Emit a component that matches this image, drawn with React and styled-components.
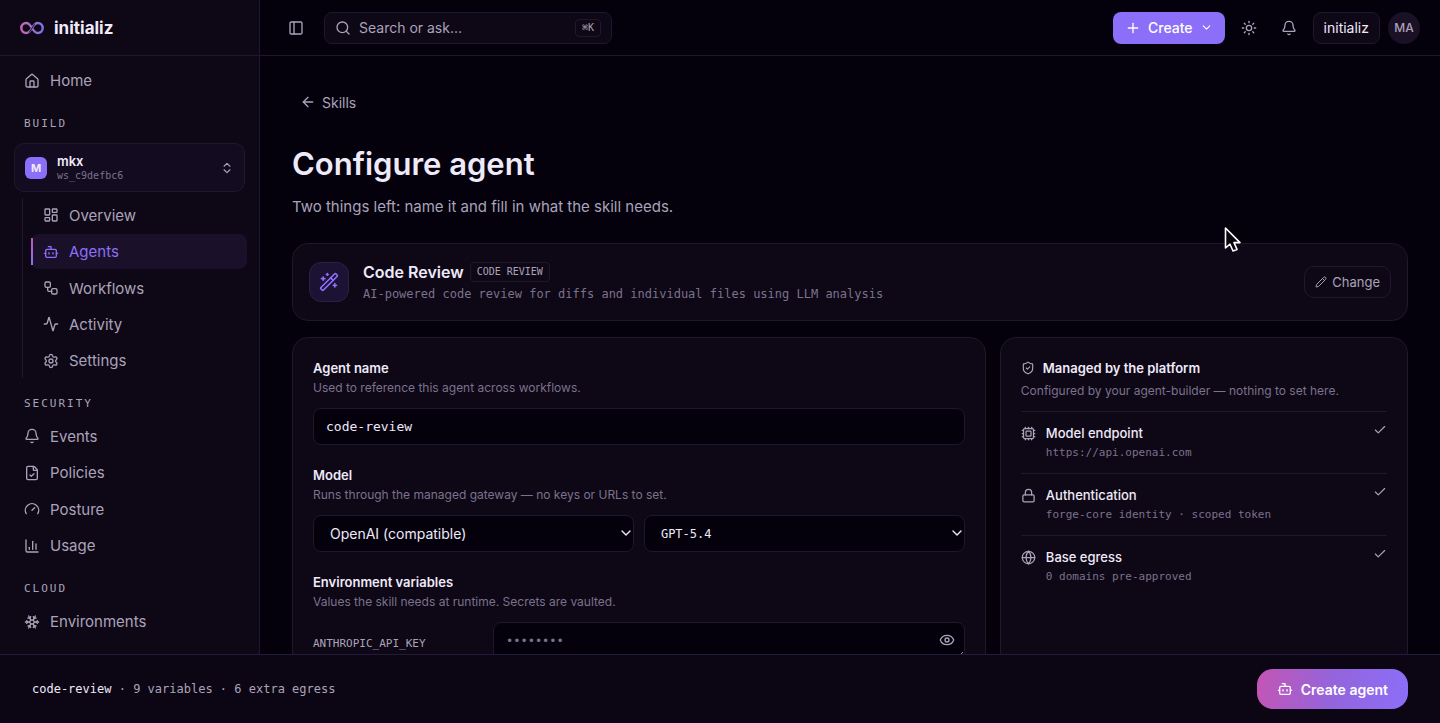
import React from 'react';
import styled, { createGlobalStyle, css } from 'styled-components';
import {
  Activity,
  ArrowLeft,
  Bell,
  Bot,
  ChartColumn,
  Check,
  ChevronDown,
  ChevronsUpDown,
  Cpu,
  Eye,
  FileCheck,
  Gauge,
  Globe,
  House,
  LayoutDashboard,
  Lock,
  PanelLeft,
  Pencil,
  Plus,
  Search,
  Settings,
  ShieldCheck,
  Snowflake,
  Sun,
  WandSparkles,
  Workflow,
} from 'lucide-react';

const sans = "Inter, 'Liberation Sans', sans-serif";
const mono = "'DejaVu Sans Mono', 'Liberation Mono', monospace";

const color = {
  page: '#04010d',
  surface: '#0e0716',
  active: '#1a1029',
  line: '#1f172c',
  text: '#efeaf9',
  soft: '#aaa3b9',
  muted: '#7b728c',
  accent: '#8b6ff8',
  pink: '#c455b4',
};

const GlobalStyle = createGlobalStyle`
  * {
    box-sizing: border-box;
  }
  body {
    margin: 0;
    background: ${color.page};
    color: ${color.text};
    font-family: ${sans};
    font-size: 14px;
    -webkit-font-smoothing: antialiased;
  }
  button, input, select, textarea {
    font-family: inherit;
    color: inherit;
    outline: none;
  }
  button {
    cursor: pointer;
  }
  a {
    color: inherit;
    text-decoration: none;
  }
  h1, h2, p {
    margin: 0;
  }
`;

const Shell = styled.div`
  display: flex;
  flex-direction: column;
  height: 100vh;
`;

const Body = styled.div`
  display: flex;
  flex: 1;
  min-height: 0;
`;

const Sidebar = styled.aside`
  width: 260px;
  flex-shrink: 0;
  overflow: hidden;
  background: ${color.surface};
  border-right: 1px solid ${color.line};
`;

const Brand = styled.a`
  display: flex;
  align-items: center;
  gap: 10px;
  height: 56px;
  padding: 0 20px;
  border-bottom: 1px solid ${color.line};
  font-size: 17px;
  font-weight: 700;
`;

const Nav = styled.nav`
  padding: 7px 12px;
`;

const NavGroup = styled.div`
  display: flex;
  flex-direction: column;
  gap: 2px;
  height: ${props => props.$height}px;
`;

const Tree = styled(NavGroup)`
  margin: 6px 0 0 10px;
  padding-left: 8px;
  border-left: 1px solid ${color.line};
`;

const NavLink = styled.a`
  position: relative;
  display: flex;
  flex: 1;
  align-items: center;
  gap: 10px;
  padding: 0 12px;
  border-radius: 8px;
  color: ${color.soft};
  font-size: 15px;

  ${props => props.$active && css`
    background: ${color.active};
    color: ${color.accent};

    &::before {
      content: '';
      position: absolute;
      left: 0;
      top: 4px;
      bottom: 4px;
      width: 2px;
      background: linear-gradient(${color.pink}, ${color.accent});
    }
  `}
`;

const NavHeading = styled.div`
  padding: 18px 12px 7px;
  color: ${color.soft};
  font-family: ${mono};
  font-size: 11px;
  line-height: 16px;
  letter-spacing: 2px;
`;

const Workspace = styled.button`
  display: flex;
  align-items: center;
  gap: 10px;
  width: calc(100% - 4px);
  height: 49px;
  margin: 4px 2px 0;
  padding: 0 10px;
  border: 1px solid ${color.line};
  border-radius: 10px;
  background: #130b1f;
  text-align: left;
`;

const WorkspaceBadge = styled.span`
  width: 22px;
  border-radius: 6px;
  background: ${color.accent};
  font-size: 11px;
  font-weight: 700;
  line-height: 22px;
  text-align: center;
`;

const WorkspaceText = styled.span`
  display: flex;
  flex: 1;
  flex-direction: column;
  font-size: 13px;
  font-weight: 600;
  line-height: 16px;
`;

const WorkspaceId = styled.span`
  color: ${color.muted};
  font-family: ${mono};
  font-size: 10px;
  font-weight: 400;
  line-height: 14px;
`;

const Content = styled.div`
  display: flex;
  flex: 1;
  flex-direction: column;
  min-width: 0;
`;

const Topbar = styled.header`
  display: flex;
  flex-shrink: 0;
  align-items: center;
  gap: 8px;
  height: 56px;
  padding: 0 20px;
  border-bottom: 1px solid ${color.line};
`;

const IconButton = styled.button`
  display: flex;
  align-items: center;
  justify-content: center;
  width: 32px;
  height: 32px;
  padding: 0;
  border: 0;
  background: none;
  color: ${color.soft};
`;

const SearchBox = styled.label`
  display: flex;
  align-items: center;
  gap: 8px;
  width: 288px;
  height: 32px;
  margin: 0 auto 0 4px;
  padding: 0 10px;
  border: 1px solid ${color.line};
  border-radius: 8px;
  background: ${color.surface};
  color: ${color.soft};
`;

const SearchInput = styled.input`
  flex: 1;
  min-width: 0;
  padding: 0;
  border: 0;
  background: none;
  font-size: 14px;

  &::placeholder {
    color: ${color.soft};
  }
`;

const Kbd = styled.kbd`
  padding: 0 6px;
  border: 1px solid ${color.line};
  border-radius: 4px;
  font-family: ${mono};
  font-size: 10px;
  line-height: 16px;
`;

const CreateButton = styled.button`
  display: flex;
  align-items: center;
  gap: 7px;
  height: 32px;
  padding: 0 12px;
  border: 0;
  border-radius: 8px;
  background: ${color.accent};
  color: #fff;
  font-size: 14px;
  font-weight: 500;
`;

const OrgButton = styled.button`
  height: 32px;
  padding: 0 10px;
  border: 1px solid ${color.line};
  border-radius: 8px;
  background: ${color.surface};
  font-size: 14px;
`;

const Avatar = styled.button`
  width: 32px;
  height: 32px;
  padding: 0;
  border: 0;
  border-radius: 50%;
  background: #1a1126;
  color: ${color.soft};
  font-size: 12px;
  font-weight: 500;
`;

const Main = styled.main`
  flex: 1;
  min-height: 0;
  overflow: hidden;
  padding: 30px 32px 0;
`;

const BackLink = styled.a`
  display: flex;
  align-items: center;
  gap: 6px;
  width: fit-content;
  height: 32px;
  padding: 0 8px;
  color: ${color.soft};
  font-size: 14px;
`;

const Title = styled.h1`
  margin-top: 26px;
  font-size: 31px;
  font-weight: 600;
  line-height: 40px;
`;

const Subtitle = styled.p`
  margin: 11px 0 24px;
  color: ${color.soft};
  font-size: 15px;
  line-height: 24px;
`;

const Card = styled.section`
  border: 1px solid ${color.line};
  border-radius: 16px;
  background: ${color.surface};
`;

const Skill = styled(Card)`
  display: flex;
  align-items: center;
  gap: 14px;
  height: 78px;
  padding: 0 16px;
`;

const SkillIcon = styled.div`
  display: flex;
  align-items: center;
  justify-content: center;
  width: 40px;
  height: 40px;
  border: 1px solid #2b2141;
  border-radius: 12px;
  background: #1c1233;
  color: ${color.accent};
`;

const SkillBody = styled.div`
  flex: 1;
`;

const SkillHead = styled.div`
  display: flex;
  align-items: center;
  gap: 6px;
`;

const SkillName = styled.h2`
  font-size: 16px;
  font-weight: 600;
  line-height: 24px;
`;

const Tag = styled.span`
  padding: 0 6px;
  border: 1px solid ${color.line};
  border-radius: 4px;
  color: ${color.soft};
  font-family: ${mono};
  font-size: 10px;
  line-height: 18px;
`;

const SkillText = styled.p`
  color: ${color.muted};
  font-family: ${mono};
  font-size: 12px;
  line-height: 20px;
`;

const ChangeButton = styled.button`
  display: flex;
  align-items: center;
  gap: 5px;
  height: 32px;
  padding: 0 10px;
  border: 1px solid ${color.line};
  border-radius: 10px;
  background: none;
  color: ${color.soft};
  font-size: 13px;
`;

const Panels = styled.div`
  display: grid;
  grid-template-columns: 1.7fr 1fr;
  gap: 14px;
  height: 440px;
  margin-top: 16px;
`;

const Panel = styled(Card)`
  padding: 20px;
`;

const Field = styled.div`
  margin-bottom: 20px;
`;

const FieldLabel = styled.label`
  display: block;
  font-size: 13px;
  font-weight: 600;
  line-height: 20px;
`;

const Help = styled.p`
  margin-bottom: 10px;
  color: ${color.muted};
  font-size: 12px;
  line-height: 20px;
`;

const control = css`
  width: 100%;
  border: 1px solid ${color.line};
  border-radius: 8px;
  background: ${color.page};
`;

const TextInput = styled.input`
  ${control}
  display: block;
  height: 37px;
  padding: 0 12px;
  font-family: ${mono};
  font-size: 13px;
`;

const SelectRow = styled.div`
  display: grid;
  grid-template-columns: 1fr 1fr;
  gap: 10px;
`;

const SelectBox = styled.div`
  position: relative;

  svg {
    position: absolute;
    top: 10px;
    right: 0;
    pointer-events: none;
  }
`;

const Select = styled.select`
  ${control}
  display: block;
  height: 37px;
  padding: 0 16px;
  appearance: none;
  font-family: ${props => (props.$mono ? mono : sans)};
  font-size: ${props => (props.$mono ? 12 : 14)}px;
`;

const EnvRow = styled.div`
  display: grid;
  grid-template-columns: 170px 1fr;
  align-items: center;
  gap: 10px;
`;

const EnvName = styled.label`
  color: ${color.soft};
  font-family: ${mono};
  font-size: 11px;
`;

const EnvValue = styled.div`
  position: relative;
  height: 43px;
`;

const SecretInput = styled.textarea`
  ${control}
  display: block;
  height: 38px;
  min-height: 38px;
  padding: 8px 36px 8px 12px;
  font-family: ${mono};
  font-size: 12px;
  line-height: 20px;
  resize: vertical;

  &::placeholder {
    color: ${color.muted};
  }
`;

const RevealButton = styled(IconButton)`
  position: absolute;
  top: 2px;
  right: 2px;
`;

const PanelTitle = styled.h2`
  display: flex;
  align-items: center;
  gap: 8px;
  font-size: 13px;
  font-weight: 600;
  line-height: 20px;

  svg {
    color: ${color.soft};
  }
`;

const PanelText = styled.p`
  padding: 2px 0 9px;
  color: ${color.muted};
  font-size: 12px;
  line-height: 22px;
`;

const Managed = styled.div`
  display: flex;
  gap: 10px;
  padding: 11px 0;
  border-top: 1px solid ${color.line};
  color: ${color.soft};
`;

const ManagedIcon = styled.span`
  display: flex;
  align-items: center;
  height: 20px;
`;

const ManagedText = styled.div`
  flex: 1;
  color: ${color.text};
  font-size: 13px;
  font-weight: 500;
  line-height: 20px;
`;

const ManagedValue = styled.div`
  color: ${color.muted};
  font-family: ${mono};
  font-size: 11px;
  font-weight: 400;
  line-height: 19px;
`;

const Footer = styled.footer`
  display: flex;
  flex-shrink: 0;
  align-items: center;
  justify-content: space-between;
  padding: 14px 32px;
  border-top: 1px solid #251a3a;
  background: #0c0614;
`;

const Summary = styled.p`
  color: ${color.soft};
  font-family: ${mono};
  font-size: 12px;

  strong {
    color: ${color.text};
    font-weight: 500;
  }
`;

const SubmitButton = styled.button`
  display: flex;
  align-items: center;
  gap: 8px;
  height: 40px;
  padding: 0 20px;
  border: 0;
  border-radius: 16px;
  background: linear-gradient(100deg, ${color.pink}, #9464dc 50%, ${color.accent});
  color: #fff;
  font-size: 14px;
  font-weight: 600;
`;

const Pointer = styled.svg`
  position: fixed;
  left: 1223px;
  top: 225px;
  pointer-events: none;
`;

function Logo() {
  return (
    <svg width="24" height="14" viewBox="0 0 24 14" fill="none">
      <defs>
        <linearGradient id="brand" x1="0" y1="0" x2="24" y2="0" gradientUnits="userSpaceOnUse">
          <stop offset="0" stopColor="#cf63b0" />
          <stop offset="0.5" stopColor="#9a72c8" />
          <stop offset="1" stopColor="#7f70f0" />
        </linearGradient>
      </defs>
      <path
        d="M12 7C10.200 4 8.600 2 6.300 2a5 5 0 0 0 0 10c2.300 0 3.900-2 5.700-5s3.400-5 5.700-5a5 5 0 0 1 0 10c-2.300 0-3.900-2-5.700-5z"
        stroke="url(#brand)"
        strokeWidth="2.400"
      />
      <path d="M9.200 11.400l5.400-8.200" stroke={color.surface} strokeWidth="0.900" />
    </svg>
  );
}

const buildLinks = [
  { label: 'Overview', icon: LayoutDashboard },
  { label: 'Agents', icon: Bot, active: true },
  { label: 'Workflows', icon: Workflow },
  { label: 'Activity', icon: Activity },
  { label: 'Settings', icon: Settings },
];

const securityLinks = [
  { label: 'Events', icon: Bell },
  { label: 'Policies', icon: FileCheck },
  { label: 'Posture', icon: Gauge },
  { label: 'Usage', icon: ChartColumn },
];

const managed = [
  { label: 'Model endpoint', value: 'https://api.openai.com', icon: Cpu },
  { label: 'Authentication', value: 'forge-core identity · scoped token', icon: Lock },
  { label: 'Base egress', value: '0 domains pre-approved', icon: Globe },
];

function renderLink({ label, icon: Icon, active }) {
  return (
    <NavLink key={label} href="#" $active={active}>
      <Icon size={16} />
      {label}
    </NavLink>
  );
}

export default function App() {
  return (
    <Shell>
      <GlobalStyle />
      <Body>
        <Sidebar>
          <Brand href="#">
            <Logo />
            initializ
          </Brand>
          <Nav>
            <NavGroup $height={35}>
              {renderLink({ label: 'Home', icon: House })}
            </NavGroup>
            <NavHeading>BUILD</NavHeading>
            <Workspace>
              <WorkspaceBadge>M</WorkspaceBadge>
              <WorkspaceText>
                mkx
                <WorkspaceId>ws_c9defbc6</WorkspaceId>
              </WorkspaceText>
              <ChevronsUpDown size={14} color={color.soft} />
            </Workspace>
            <Tree $height={180}>{buildLinks.map(renderLink)}</Tree>
            <NavHeading>SECURITY</NavHeading>
            <NavGroup $height={144}>{securityLinks.map(renderLink)}</NavGroup>
            <NavHeading>CLOUD</NavHeading>
            <NavGroup $height={35}>
              {renderLink({ label: 'Environments', icon: Snowflake })}
            </NavGroup>
          </Nav>
        </Sidebar>

        <Content>
          <Topbar>
            <IconButton aria-label="Toggle sidebar"><PanelLeft size={16} /></IconButton>
            <SearchBox>
              <Search size={16} />
              <SearchInput type="text" placeholder="Search or ask..." />
              <Kbd>⌘K</Kbd>
            </SearchBox>
            <CreateButton>
              <Plus size={16} />
              Create
              <ChevronDown size={13} />
            </CreateButton>
            <IconButton aria-label="Theme"><Sun size={16} /></IconButton>
            <IconButton aria-label="Notifications"><Bell size={16} /></IconButton>
            <OrgButton>initializ</OrgButton>
            <Avatar>MA</Avatar>
          </Topbar>

          <Main>
            <BackLink href="#">
              <ArrowLeft size={16} />
              Skills
            </BackLink>
            <Title>Configure agent</Title>
            <Subtitle>Two things left: name it and fill in what the skill needs.</Subtitle>

            <Skill>
              <SkillIcon><WandSparkles size={20} /></SkillIcon>
              <SkillBody>
                <SkillHead>
                  <SkillName>Code Review</SkillName>
                  <Tag>CODE REVIEW</Tag>
                </SkillHead>
                <SkillText>
                  AI-powered code review for diffs and individual files using LLM analysis
                </SkillText>
              </SkillBody>
              <ChangeButton>
                <Pencil size={12} />
                Change
              </ChangeButton>
            </Skill>

            <Panels>
              <Panel>
                <Field>
                  <FieldLabel htmlFor="name">Agent name</FieldLabel>
                  <Help>Used to reference this agent across workflows.</Help>
                  <TextInput id="name" type="text" defaultValue="code-review" />
                </Field>
                <Field>
                  <FieldLabel htmlFor="provider">Model</FieldLabel>
                  <Help>Runs through the managed gateway — no keys or URLs to set.</Help>
                  <SelectRow>
                    <SelectBox>
                      <Select id="provider">
                        <option>OpenAI (compatible)</option>
                      </Select>
                      <ChevronDown size={16} />
                    </SelectBox>
                    <SelectBox>
                      <Select $mono aria-label="Model version">
                        <option>GPT-5.4</option>
                      </Select>
                      <ChevronDown size={16} />
                    </SelectBox>
                  </SelectRow>
                </Field>
                <Field>
                  <FieldLabel as="div">Environment variables</FieldLabel>
                  <Help>Values the skill needs at runtime. Secrets are vaulted.</Help>
                  <EnvRow>
                    <EnvName htmlFor="anthropic">ANTHROPIC_API_KEY</EnvName>
                    <EnvValue>
                      <SecretInput id="anthropic" placeholder="••••••••" />
                      <RevealButton aria-label="Show value"><Eye size={16} /></RevealButton>
                    </EnvValue>
                  </EnvRow>
                </Field>
              </Panel>

              <Panel>
                <PanelTitle>
                  <ShieldCheck size={14} />
                  Managed by the platform
                </PanelTitle>
                <PanelText>Configured by your agent-builder — nothing to set here.</PanelText>
                {managed.map(({ label, value, icon: Icon }) => (
                  <Managed key={label}>
                    <ManagedIcon><Icon size={15} /></ManagedIcon>
                    <ManagedText>
                      {label}
                      <ManagedValue>{value}</ManagedValue>
                    </ManagedText>
                    <Check size={14} />
                  </Managed>
                ))}
              </Panel>
            </Panels>
          </Main>
        </Content>
      </Body>

      <Footer>
        <Summary>
          <strong>code-review</strong> · 9 variables · 6 extra egress
        </Summary>
        <SubmitButton>
          <Bot size={16} />
          Create agent
        </SubmitButton>
      </Footer>

      <Pointer width="20" height="29" viewBox="0 0 20 29">
        <path
          d="M2.500 3v20l4.500-3.800 3 6.800 4-1.600-3-6.800h6z"
          fill="#08040e"
          stroke="#fff"
          strokeWidth="1.600"
          strokeLinejoin="round"
        />
      </Pointer>
    </Shell>
  );
}
